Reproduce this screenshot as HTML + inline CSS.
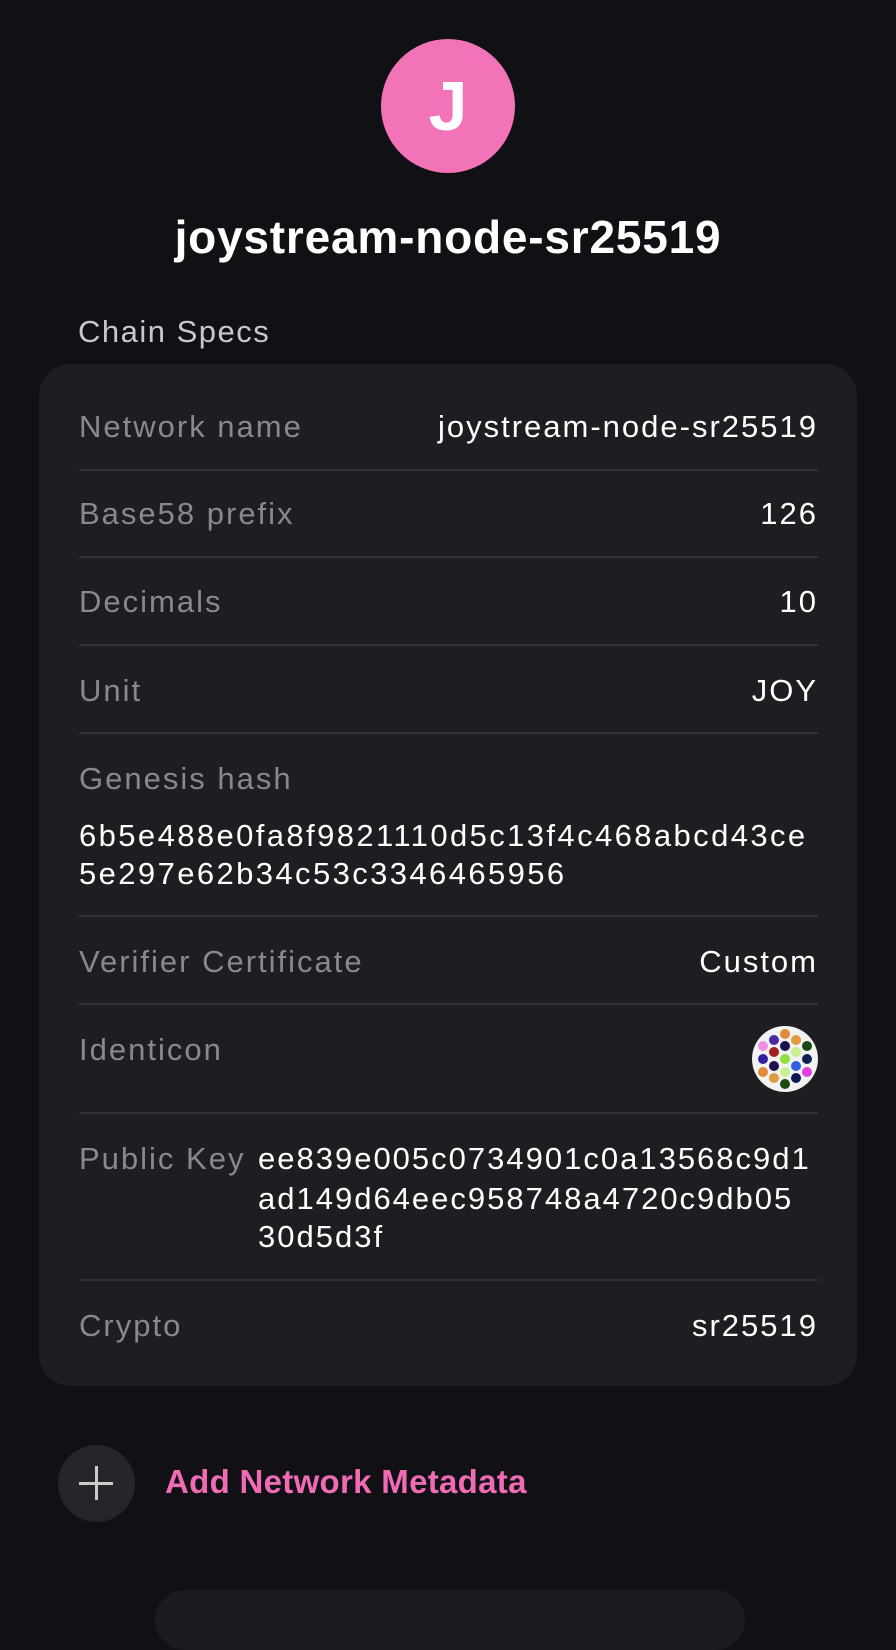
<!DOCTYPE html>
<html><head><meta charset="utf-8"><style>
*{margin:0;padding:0;box-sizing:border-box}
body{width:896px;height:1600px;background:#111115;font-family:"Liberation Sans",sans-serif;color:#fff;position:relative;overflow:hidden}
.abs{position:absolute}
.av{left:381px;top:39px;width:134px;height:134px;border-radius:50%;background:#f373b8;color:#fff;font-weight:bold;font-size:70px;text-align:center;line-height:134px}
.title{left:0;width:896px;top:210px;text-align:center;font-weight:bold;font-size:46px;letter-spacing:0.8px}
.cs{left:78px;top:314px;font-size:31px;color:#c8c8cc;letter-spacing:1.5px}
.card{left:39px;top:364px;width:818px;height:1022px;border-radius:32px;background:#1e1e22}
.t{position:absolute;font-size:31px;letter-spacing:2px;line-height:38px}
.l{left:79px;color:#88888e}
.r{right:78px;color:#fff;text-align:right}
.v{color:#fff}
.d{position:absolute;left:79px;width:739px;height:2px;background:#323236}
</style></head><body>
<div class="abs av">J</div>
<div class="abs title">joystream-node-sr25519</div>
<div class="abs cs">Chain Specs</div>
<div class="abs card"></div>

<div class="t l" style="top:408px">Network name</div>
<div class="t r" style="top:408px">joystream-node-sr25519</div>
<div class="d" style="top:469px"></div>
<div class="t l" style="top:495px">Base58 prefix</div>
<div class="t r" style="top:495px">126</div>
<div class="d" style="top:556px"></div>
<div class="t l" style="top:583px">Decimals</div>
<div class="t r" style="top:583px">10</div>
<div class="d" style="top:644px"></div>
<div class="t l" style="top:672px">Unit</div>
<div class="t r" style="top:672px">JOY</div>
<div class="d" style="top:732px"></div>
<div class="t l" style="top:760px">Genesis hash</div>
<div class="t v" style="left:79px;top:817px;letter-spacing:2.4px">6b5e488e0fa8f9821110d5c13f4c468abcd43ce</div>
<div class="t v" style="left:79px;top:855px;letter-spacing:2.4px">5e297e62b34c53c3346465956</div>
<div class="d" style="top:915px"></div>
<div class="t l" style="top:943px">Verifier Certificate</div>
<div class="t r" style="top:943px">Custom</div>
<div class="d" style="top:1003px"></div>
<div class="t l" style="top:1031px">Identicon</div>
<svg class="abs" style="left:752px;top:1026px" width="66" height="66" viewBox="0 0 66 66">
<circle cx="33" cy="33" r="33" fill="#f2f2f2"/>
<g>
<circle cx="33" cy="8" r="5" fill="#e08a3a"/>
<circle cx="22" cy="14" r="5" fill="#4a2aa0"/>
<circle cx="44" cy="14" r="5" fill="#e09a40"/>
<circle cx="11" cy="20" r="5" fill="#f090e0"/>
<circle cx="33" cy="20" r="5" fill="#1a1050"/>
<circle cx="55" cy="20" r="5" fill="#1a4a10"/>
<circle cx="22" cy="26" r="5" fill="#a02020"/>
<circle cx="44" cy="26" r="5" fill="#c8f090"/>
<circle cx="11" cy="33" r="5" fill="#3020a0"/>
<circle cx="33" cy="33" r="5" fill="#90e040"/>
<circle cx="55" cy="33" r="5" fill="#102050"/>
<circle cx="22" cy="40" r="5" fill="#201050"/>
<circle cx="44" cy="40" r="5" fill="#3060e0"/>
<circle cx="11" cy="46" r="5" fill="#e08a3a"/>
<circle cx="33" cy="46" r="5" fill="#c8f090"/>
<circle cx="55" cy="46" r="5" fill="#e040e0"/>
<circle cx="22" cy="52" r="5" fill="#e09a40"/>
<circle cx="44" cy="52" r="5" fill="#0a1a50"/>
<circle cx="33" cy="58" r="5" fill="#1a4a10"/>
</g></svg>
<div class="d" style="top:1112px"></div>
<div class="t l" style="top:1140px">Public Key</div>
<div class="t v" style="left:258px;top:1140px;letter-spacing:2px">ee839e005c0734901c0a13568c9d1</div>
<div class="t v" style="left:258px;top:1180px;letter-spacing:2px">ad149d64eec958748a4720c9db05</div>
<div class="t v" style="left:258px;top:1218px;letter-spacing:2px">30d5d3f</div>
<div class="d" style="top:1279px"></div>
<div class="t l" style="top:1307px">Crypto</div>
<div class="t r" style="top:1307px">sr25519</div>

<div class="abs" style="left:58px;top:1445px;width:77px;height:77px;border-radius:50%;background:#25252a"></div>
<div class="abs" style="left:79px;top:1482px;width:34px;height:3px;background:#ccc"></div>
<div class="abs" style="left:95px;top:1466px;width:3px;height:34px;background:#ccc"></div>
<div class="abs" style="left:165px;top:1463px;font-size:33px;font-weight:bold;color:#f06bb5;letter-spacing:0.3px">Add Network Metadata</div>
<div class="abs" style="left:155px;top:1590px;width:590px;height:60px;border-radius:30px;background:#1c1c20"></div>
</body></html>
